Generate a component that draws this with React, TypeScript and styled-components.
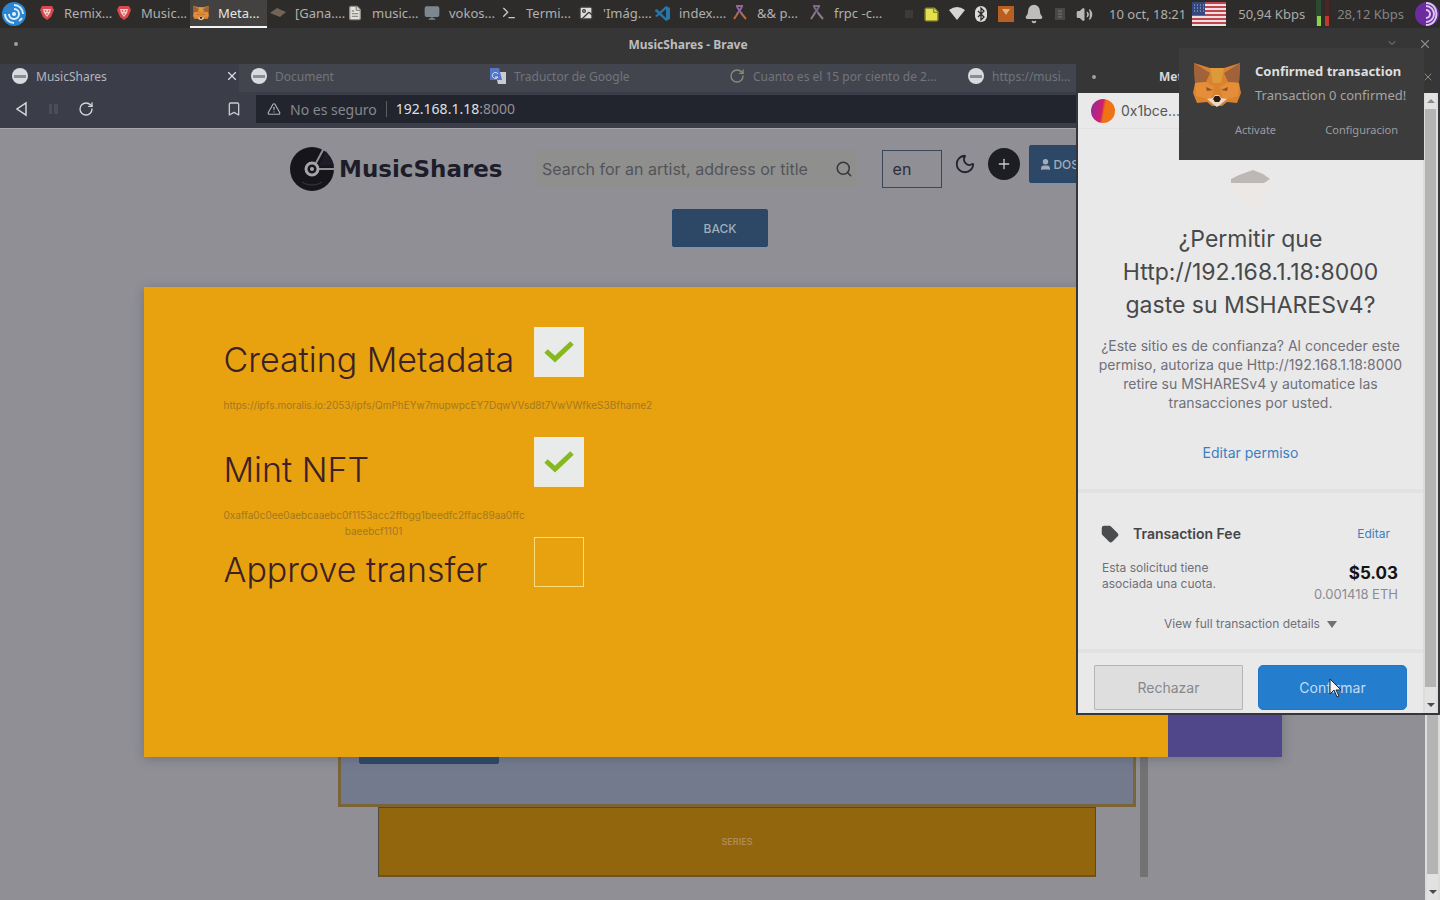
import React from 'react';
import styled, { createGlobalStyle } from 'styled-components';
import {
  Bell, Bookmark, ChevronDown, FileText, Image, Monitor, Moon, Plus, RotateCw, Search, StickyNote,
  Tag, Terminal, TriangleAlert, User, Volume2, X,
} from 'lucide-react';

const GlobalStyle = createGlobalStyle`
  * { box-sizing: border-box; }
  body { margin: 0; background: #8f8f95; }
  button, input, select { font: inherit; margin: 0; }
  h1, h2, p { margin: 0; font-weight: 400; }
  svg { display: block; flex: none; }
`;

const uiFont = '"Noto Sans", sans-serif';
const appFont = 'Inter, sans-serif';

/* ---------- desktop ---------- */

const Desktop = styled.div`
  position: relative;
  display: flex;
  flex-direction: column;
  min-height: 100vh;
  overflow: hidden;
  font-family: ${uiFont};
`;

const Panel = styled.header`
  display: flex;
  justify-content: space-between;
  height: 28px;
  background: #2d2c2b;
  color: #b0b0ae;
  font-size: 13px;
`;

const TaskList = styled.nav`
  display: flex;
  gap: 10px;
  padding-left: 2px;
  align-items: center;
`;

const Tasks = styled.div`
  display: flex;
`;

const Task = styled.button<{ $active?: boolean }>`
  display: flex;
  align-items: center;
  gap: 9px;
  width: 77px;
  height: 28px;
  padding: 0 0 0 3px;
  border: 0;
  border-bottom: 2px solid ${p => (p.$active ? '#f4f4f4' : 'transparent')};
  background: ${p => (p.$active ? '#434240' : 'transparent')};
  color: ${p => (p.$active ? '#e6e6e6' : '#b0b0ae')};
  white-space: nowrap;
`;

const Tray = styled.div`
  display: flex;
  align-items: center;
  padding-right: 1px;
  white-space: nowrap;
`;

const TrayIcons = styled.div`
  display: flex;
  align-items: center;
  gap: 9px;
  margin-right: 16px;
`;

const Clock = styled.span`
  margin-right: 6px;
`;

const TrayText = styled.span<{ $dim?: boolean }>`
  color: ${p => (p.$dim ? '#848484' : '#aaaaaa')};
  padding: 0 11px 0 ${p => (p.$dim ? 7 : 12)}px;
`;

/* ---------- browser window ---------- */

const TitleBar = styled.div`
  display: grid;
  grid-template-columns: 62px 1fr 62px;
  align-items: center;
  height: 36px;
  padding: 0 8px 4px 14px;
  background: #363636;
  color: #bdbdbd;
  font-size: 12px;
  font-weight: 700;
`;

const WindowTitle = styled.span`
  justify-self: center;
  padding-right: 70px;
`;

const WindowControls = styled.span`
  display: flex;
  justify-content: flex-end;
  gap: 20px;
  color: #8a8a8a;
`;

const Dot = styled.i`
  width: 4px;
  height: 4px;
  border-radius: 2px;
  background: #a0a0a0;
`;

const TabStrip = styled.div`
  display: flex;
  height: 28px;
  background: #43454e;
`;

const Tab = styled.div<{ $active?: boolean }>`
  display: flex;
  align-items: center;
  gap: 8px;
  width: 239px;
  padding: 0 0 4px 12px;
  background: ${p => (p.$active ? '#3b3d49' : '#43454e')};
  color: ${p => (p.$active ? '#b4b6bd' : '#71747c')};
  font-size: 12px;
  white-space: nowrap;
`;

const TabLabel = styled.span`
  flex: 1;
  overflow: hidden;
`;

const PlainButton = styled.button`
  display: flex;
  padding: 0;
  border: 0;
  background: none;
  color: inherit;
`;

const Toolbar = styled.div`
  display: flex;
  align-items: center;
  height: 37px;
  padding: 0 0 2px 14px;
  border-bottom: 1px solid #a5a7ab;
  background: #3b3d49;
  color: #c9cad0;
`;

const NavButtons = styled.div`
  display: flex;
  align-items: center;
  gap: 16px;
  width: 212px;
`;

const AddressBar = styled.div`
  display: flex;
  flex: 1;
  align-items: center;
  gap: 9px;
  height: 28px;
  margin-left: 14px;
  padding-left: 11px;
  background: #23252e;
  color: #85888f;
  font-size: 14px;
`;

const Address = styled.span`
  padding-left: 9px;
  border-left: 1px solid #5b5d65;
  line-height: 16px;
  color: #8f9299;
`;

const Host = styled.span`
  color: #dfe0e4;
`;

const Viewport = styled.div`
  position: relative;
  display: flex;
  flex: 1;
`;

const Page = styled.main`
  position: relative;
  display: flex;
  flex: 1;
  flex-direction: column;
  padding-bottom: 23px;
  background: #8f8f95;
  font-family: ${appFont};
`;

const SiteHeader = styled.div`
  display: flex;
  align-items: center;
  width: 100%;
  max-width: 845px;
  height: 80px;
  margin: 0 auto;
`;

const Brand = styled.a`
  display: flex;
  align-items: center;
  gap: 4px;
  width: 247px;
  color: #1d1d29;
  font-family: "DejaVu Sans", sans-serif;
  font-size: 23px;
  font-weight: 700;
  text-decoration: none;
`;

const SearchBox = styled.label`
  display: flex;
  align-items: center;
  width: 322px;
  height: 38px;
  padding: 0 4px 0 6px;
  background: #8f8f8e;
  color: #34353d;
`;

const SearchInput = styled.input`
  flex: 1;
  min-width: 0;
  padding: 0;
  border: 0;
  outline: 0;
  background: none;
  color: #3f4047;
  font-size: 16px;
  &::placeholder { color: #53545a; opacity: 1; }
`;

const Language = styled.select`
  width: 61px;
  height: 38px;
  margin-left: 25px;
  padding: 0 10px;
  border: 1px solid #3a4759;
  background: none;
  color: #2c2d35;
  font-size: 16px;
  appearance: none;
`;

const HeaderActions = styled.div`
  display: flex;
  align-items: center;
  gap: 12px;
  margin: 0 9px 10px 12px;
  color: #23242e;
`;

const AddButton = styled(PlainButton)`
  align-items: center;
  justify-content: center;
  width: 32px;
  height: 32px;
  border-radius: 16px;
  background: #1d1d24;
  color: #c9c9cd;
`;

const BlueButton = styled.button<{ $width: number }>`
  display: flex;
  align-items: center;
  justify-content: center;
  gap: 1px;
  width: ${p => p.$width}px;
  height: 38px;
  border: 1px solid #23496f;
  border-radius: 2px;
  background: #2c4866;
  color: #a3adb9;
  font-size: 12px;
  font-weight: 500;
`;

const WalletButton = styled(BlueButton)`
  justify-content: flex-start;
  margin-bottom: 10px;
  padding: 0 9px;
`;

const BackRow = styled.div`
  display: flex;
  justify-content: center;
  padding-left: 15px;
`;

const FormArea = styled.section`
  display: flex;
  align-self: center;
  width: 100%;
  max-width: 871px;
  margin-top: 60px;
  padding-left: 61px;
`;

const FormColumn = styled.div`
  display: flex;
  flex: 1;
  flex-direction: column;
  align-items: center;
`;

const FormCard = styled.div`
  display: flex;
  flex-direction: column;
  justify-content: flex-end;
  width: 100%;
  height: 500px;
  padding: 0 18px 40px;
  border: 3px solid #7a6538;
  background: #747a8e;
`;

const SeriesButton = styled.button`
  width: 90%;
  height: 70px;
  border: 1px solid #4e4a3a;
  border-bottom: 2px solid #6f5220;
  background: #91660d;
  color: #b08a58;
  font-size: 9px;
  font-weight: 600;
`;

const FormScroll = styled.div`
  width: 8px;
  margin-left: 4px;
  background: #727274;
`;

const Overlay = styled.div`
  position: absolute;
  inset: 158px 0 auto;
  display: flex;
  justify-content: center;
`;

const Modal = styled.section`
  display: grid;
  grid-template-columns: 1fr 114px;
  width: 80%;
  max-width: 1138px;
  height: 470px;
  box-shadow: 0 2px 10px rgba(60, 70, 80, 0.35);
`;

const Steps = styled.div`
  display: flex;
  flex-direction: column;
  padding: 40px 80px;
  background: #e8a10f;
`;

const ModalSide = styled.div`
  background: #50468a;
`;

const Step = styled.div<{ $height: number }>`
  display: grid;
  grid-template-columns: 300px 50px;
  grid-template-rows: 50px auto;
  column-gap: 10px;
  height: ${p => p.$height}px;
`;

const StepTitle = styled.h2`
  padding-top: 12px;
  color: #3b2128;
  font-size: 34px;
  font-weight: 300;
  line-height: 42px;
  white-space: nowrap;
`;

const StepBox = styled.span<{ $done?: boolean }>`
  display: flex;
  align-items: center;
  justify-content: center;
  width: 50px;
  height: 50px;
  border: 1px solid ${p => (p.$done ? '#f4ead0' : '#fbdc7c')};
  background: ${p => (p.$done ? '#e9ebea' : 'transparent')};
`;

const StepNote = styled.p`
  padding-top: 20px;
  color: #a17a22;
  font-size: 10px;
  line-height: 16px;
  text-align: center;
  white-space: nowrap;
`;

const NoteLink = styled.a`
  color: inherit;
  text-decoration: none;
`;

const ScrollTrack = styled.div`
  display: flex;
  flex-direction: column;
  align-items: center;
  justify-content: space-between;
  width: 15px;
  border: solid #dcdcdc;
  border-width: 0 2px;
  background: #e2e2e2;
`;

const ScrollThumb = styled.div`
  flex: 1;
  width: 100%;
  margin-bottom: 10px;
  background: #b4b4b4;
`;

const ScrollArrow = styled.i<{ $up?: boolean }>`
  margin: 6px 0;
  border: 4px solid transparent;
  border-top: ${p => (p.$up ? '0' : '4px solid #4a4a4a')};
  border-bottom: ${p => (p.$up ? '4px solid #8a8a8a' : '0')};
`;

/* ---------- wallet window ---------- */

const WalletWindow = styled.aside`
  position: absolute;
  top: 64px;
  right: 0;
  width: 364px;
  border: solid #35353b;
  border-width: 0 2px 2px;
  background: #35353b;
  font-family: ${appFont};
`;

const WalletTitle = styled.div`
  display: flex;
  align-items: center;
  height: 29px;
  padding: 0 4px 4px 14px;
  background: #363636;
  color: #d8d8d8;
  font-family: ${uiFont};
  font-size: 12px;
  font-weight: 700;
`;

const WalletTitleText = styled.span`
  flex: 1;
  padding-left: 63px;
`;

const WalletBody = styled.div`
  display: flex;
`;

const WalletContent = styled.div`
  flex: 1;
  background: #e9e9ea;
  color: #6f7078;
`;

const Account = styled.div`
  display: flex;
  align-items: center;
  gap: 6px;
  height: 36px;
  padding-left: 13px;
  border-bottom: 1px solid #e2e2e2;
  color: #55565a;
  font-size: 14px;
`;

const Avatar = styled.span`
  width: 24px;
  height: 24px;
  border-radius: 12px;
  background: linear-gradient(100deg, #8c2fa0, #d01f6c 45%, #ef7215 55%);
`;

const SiteIcon = styled.div`
  display: flex;
  justify-content: center;
  padding-top: 38px;
`;

const Question = styled.h1`
  margin-top: 16px;
  color: #48494b;
  font-size: 23px;
  line-height: 33px;
  text-align: center;
`;

const Explanation = styled.p`
  margin-top: 14px;
  font-size: 14px;
  line-height: 19px;
  text-align: center;
  white-space: nowrap;
`;

const WalletLink = styled.a<{ $size: number }>`
  color: #3b7fc0;
  font-size: ${p => p.$size}px;
  line-height: 20px;
  text-decoration: none;
`;

const Centered = styled.div`
  display: flex;
  justify-content: center;
  padding: 31px 0 26px;
`;

const Divider = styled.hr`
  height: 4px;
  margin: 0;
  border: 0;
  background: #e2e2e2;
`;

const FeeHeader = styled.div`
  display: flex;
  align-items: center;
  gap: 14px;
  padding: 31px 33px 0 23px;
  line-height: 20px;
`;

const FeeTitle = styled.strong`
  flex: 1;
  color: #444547;
  font-size: 14px;
  font-weight: 600;
`;

const FeeDetail = styled.div`
  display: flex;
  justify-content: space-between;
  padding: 16px 25px 0 24px;
  font-size: 12px;
  line-height: 16px;
`;

const Amount = styled.div`
  display: flex;
  flex-direction: column;
  align-items: flex-end;
  padding-top: 3px;
  font-size: 13px;
  line-height: 21px;
  color: #8b8b90;
`;

const Total = styled.strong`
  color: #131315;
  font-size: 17px;
  font-weight: 700;
`;

const DetailsButton = styled(PlainButton)`
  align-items: center;
  gap: 7px;
  margin: 10px auto 16px;
  font-size: 12px;
  line-height: 18px;
`;

const WalletActions = styled.div`
  display: grid;
  grid-template-columns: 1fr 1fr;
  gap: 15px;
  padding: 12px 16px 3px;
`;

const ActionButton = styled.button<{ $primary?: boolean }>`
  position: relative;
  height: 45px;
  border: 1px solid ${p => (p.$primary ? '#2377c6' : '#b5b5b7')};
  border-radius: ${p => (p.$primary ? 5 : 1)}px;
  background: ${p => (p.$primary ? '#247dcd' : '#dededf')};
  color: ${p => (p.$primary ? '#c4dcf2' : '#88888c')};
  font-size: 14px;
`;

const Pointer = styled.svg`
  position: absolute;
  top: 12px;
  left: 69px;
`;

/* ---------- notification ---------- */

const Toast = styled.section`
  position: absolute;
  top: 48px;
  right: 16px;
  display: grid;
  grid-template-columns: 48px 1fr;
  column-gap: 14px;
  width: 245px;
  height: 112px;
  padding: 13px 14px;
  background: #3c3c3c;
  color: #a4a4a4;
  font-size: 13px;
  line-height: 20px;
`;

const ToastText = styled.div`
  display: flex;
  flex-direction: column;
  gap: 4px;
  white-space: nowrap;
`;

const ToastTitle = styled.strong`
  color: #dedede;
`;

const ToastActions = styled.div`
  display: flex;
  grid-column: 1 / 3;
  justify-content: space-between;
  padding: 4px 12px 0 42px;
`;

const ToastButton = styled(PlainButton)`
  color: #9a9da3;
  font-size: 11px;
`;

/* ---------- drawings ---------- */

const Fox = ({ size }: { size: number }) => (
  <svg width={size} height={size} viewBox="0 0 48 48">
    <path d="M1 2l16 5h14l16-5-1 20 2 10-4 10-10-1-5 4h-10l-5-4-10 1-4-10 2-10z" fill="#d9822f" />
    <path d="M1 2l16 10-4 9-11 1zM47 2L31 12l4 9 11 1z" fill="#a0623a" />
    <path d="M17 7h14l-3 15h-8z" fill="#dd9a3a" />
    <path d="M2 22l11-1 8 5-3 13-15-4zM46 22l-11-1-8 5 3 13 15-4z" fill="#e58d38" />
    <path d="M13 26l7 3-6 1zM35 26l-7 3 6 1z" fill="#8a5428" />
    <path d="M14 38l6-1 2-3h4l2 3 6 1-6 5-4 3-4-3z" fill="#e8d9c9" />
    <path d="M20 38l2-3h4l2 3-2 3h-4z" fill="#2c1a14" />
  </svg>
);

const Lion = () => (
  <svg width="16" height="16" viewBox="0 0 16 16">
    <path d="M3 1h10l2 4-3 7-4 3-4-3-3-7z" fill="#d8484c" />
    <path d="M4 4h8l-1 4-3 4-3-4z" fill="#f3cdce" />
    <path d="M6 5l1 2M10 5L9 7M8 8v2" stroke="#d8484c" />
  </svg>
);

const Swirl = () => (
  <svg width="24" height="24" viewBox="0 0 24 24" fill="none">
    <circle cx="12" cy="12" r="12" fill="#2b86cf" />
    <circle cx="12" cy="12" r="2" fill="#e7f3fc" />
    <path d="M12 7a5 5 0 1 1-5 5M12 3a9 9 0 0 1 9 9M3 12a9 9 0 0 0 9 9M17 19a9 9 0 0 0 3-3" stroke="#dceefa" strokeWidth="2" />
  </svg>
);

const Disc = () => (
  <svg width="45" height="45" viewBox="0 0 45 45" fill="none">
    <circle cx="22" cy="22" r="22" fill="#15151b" />
    <path d="M26 16L34 1M28 22h17" stroke="#8f8f95" strokeWidth="2" />
    <path d="M36 4l8 14-15 1z" fill="#1d1d29" />
    <circle cx="22" cy="22" r="6" fill="#15151b" stroke="#a5a5a9" strokeWidth="3" />
    <circle cx="22" cy="22" r="2" fill="#a5a5a9" />
    <path d="M12 35c6 4 14 4 20 0" stroke="#3a3a42" />
  </svg>
);

const PageIcon = () => (
  <svg width="16" height="16" viewBox="0 0 16 16">
    <circle cx="8" cy="8" r="8" fill="#d9dae0" />
    <path d="M2 7h12v3H2z" fill="#8b8d95" />
  </svg>
);

const Translate = () => (
  <svg width="16" height="16" viewBox="0 0 16 16">
    <path d="M5 4h11v12H8z" fill="#c9cbd2" />
    <path d="M0 0h9l3 12H0z" fill="#5476c9" />
    <path d="M8 6a3 3 0 1 0 0 3H5" fill="none" stroke="#dfe5f6" />
  </svg>
);

const CodeMark = () => (
  <svg width="15" height="15" viewBox="0 0 15 15">
    <path d="M0 4l2-1 9 9V3L2 11l-2-1 11-10 4 2v11l-4 2L0 5z" fill="#2577ac" />
  </svg>
);

const Ribbon = ({ dim }: { dim?: boolean }) => (
  <svg width="16" height="16" viewBox="0 0 16 16" fill="none" strokeWidth="2">
    <path d="M4 1h7M5 2l5 7M10 2L5 9" stroke={dim ? '#7c6a85' : '#94679b'} />
    <path d="M6 8l-4 6M9 8l5 6" stroke={dim ? '#8a7a8c' : '#b96a3e'} />
  </svg>
);

const BluetoothBadge = () => (
  <svg width="14" height="18" viewBox="0 0 14 18">
    <rect x="1" y="1" width="12" height="16" rx="6" fill="#dcdcdc" />
    <path d="M4 6l6 6-3 3V3l3 3-6 6" fill="none" stroke="#2d2c2b" strokeWidth="1.3" />
  </svg>
);

const Flag = () => (
  <svg width="34" height="24" viewBox="0 0 34 24">
    <path d="M0 0h34v24H0z" fill="#e6e2e2" />
    <path d="M0 1h34M0 5h34M0 9h34M0 13h34M0 17h34M0 21h34" stroke="#c4424c" strokeWidth="2" />
    <path d="M0 0h13v13H0z" fill="#36467f" />
    <path d="M2 3h10M2 6h10M2 9h10" stroke="#b9bfd6" strokeDasharray="1 2" />
  </svg>
);

const Meter = () => (
  <svg width="14" height="28" viewBox="0 0 14 28">
    <path d="M0 0h5v26H0z" fill="#2b4a2f" />
    <path d="M9 0h4v26H9z" fill="#4d2524" />
    <path d="M1 16h4v10H1z" fill="#8ed04b" />
    <path d="M9 16h4v10H9z" fill="#c0392b" />
  </svg>
);

const Broadcast = () => (
  <svg width="24" height="24" viewBox="0 0 24 24" fill="none">
    <circle cx="12" cy="12" r="12" fill="#6d2ba0" />
    <path d="M11 4a8 8 0 0 1 0 16M11 8a4 4 0 0 1 0 8M11 1c14 0 14 22 0 22" stroke="#dcc8ec" strokeWidth="2" />
  </svg>
);

const tasks: { icon: React.ReactNode; label: string; active?: boolean }[] = [
  { icon: <Lion />, label: 'Remix...' },
  { icon: <Lion />, label: 'Music...' },
  { icon: <Fox size={16} />, label: 'Meta...', active: true },
  { icon: <svg width="16" height="16"><path d="M0 8l7-5 9 4-6 5z" fill="#716457" /></svg>, label: '[Gana....' },
  { icon: <FileText size={16} color="#8f8d88" fill="#e3e1dc" />, label: 'music...' },
  { icon: <Monitor size={16} color="#7d8790" fill="#7d8790" />, label: 'vokos...' },
  { icon: <Terminal size={16} color="#c8c8c8" />, label: 'Termi...' },
  { icon: <Image size={16} color="#3a3a3a" fill="#dedede" />, label: "'Imág...." },
  { icon: <CodeMark />, label: 'index....' },
  { icon: <Ribbon />, label: '&& p...' },
  { icon: <Ribbon dim />, label: 'frpc -c...' },
];

const tabs: { icon: React.ReactNode; label: string; active?: boolean }[] = [
  { icon: <PageIcon />, label: 'MusicShares', active: true },
  { icon: <PageIcon />, label: 'Document' },
  { icon: <Translate />, label: 'Traductor de Google' },
  { icon: <RotateCw size={16} color="#8d8a7c" />, label: 'Cuanto es el 15 por ciento de 2...' },
  { icon: <PageIcon />, label: 'https://musi...' },
];

const Check = () => (
  <svg width="32" height="26" viewBox="0 0 32 26">
    <path d="M3 12l9 8L29 4" fill="none" stroke="#86b81f" strokeWidth="5" />
  </svg>
);

export default function App() {
  return (
    <Desktop>
      <GlobalStyle />
      <Panel>
        <TaskList>
          <Swirl />
          <Tasks>
            {tasks.map(t => (
              <Task key={t.label} $active={t.active}>{t.icon}{t.label}</Task>
            ))}
          </Tasks>
        </TaskList>
        <Tray>
          <TrayIcons>
            <svg width="10" height="10"><path d="M1 1h8v8H1z" fill="#3c3b3a" /></svg>
            <StickyNote size={17} color="#8b8a2e" fill="#e5e04e" />
            <svg width="16" height="14"><path d="M0 3q8-6 16 0l-8 10z" fill="#d5d5d5" /></svg>
            <BluetoothBadge />
            <svg width="18" height="18"><path d="M1 1h16v16H1z" fill="#b95f22" /><path d="M5 4h8l-4 6z" fill="#e8b27a" /></svg>
            <Bell size={20} color="#bdbdbd" fill="#bdbdbd" />
            <svg width="14" height="14"><path d="M2 1h10v12H2z" fill="#484848" /><path d="M5 4h4M5 7h4M5 10h4" stroke="#777" /></svg>
            <Volume2 size={17} color="#b8b8b8" fill="#b8b8b8" />
          </TrayIcons>
          <Clock>10 oct, 18:21</Clock>
          <Flag />
          <TrayText>50,94 Kbps</TrayText>
          <Meter />
          <TrayText $dim>28,12 Kbps</TrayText>
          <Broadcast />
        </Tray>
      </Panel>

      <TitleBar>
        <Dot />
        <WindowTitle>MusicShares - Brave</WindowTitle>
        <WindowControls><ChevronDown size={12} /><X size={14} /></WindowControls>
      </TitleBar>
      <TabStrip>
        {tabs.map(t => (
          <Tab key={t.label} $active={t.active}>
            {t.icon}
            <TabLabel>{t.label}</TabLabel>
            {t.active && <PlainButton aria-label="Close tab"><X size={14} color="#dcdde2" /></PlainButton>}
          </Tab>
        ))}
      </TabStrip>
      <Toolbar>
        <NavButtons>
          <PlainButton aria-label="Back">
            <svg width="16" height="16"><path d="M12 2v12L3 8z" fill="none" stroke="#d4d5da" strokeWidth="1.5" /></svg>
          </PlainButton>
          <PlainButton aria-label="Forward">
            <svg width="16" height="16"><path d="M3 3h3v10H3zM8 3h4v10H8z" fill="#4b4d57" /></svg>
          </PlainButton>
          <PlainButton aria-label="Reload"><RotateCw size={16} color="#d4d5da" /></PlainButton>
        </NavButtons>
        <PlainButton aria-label="Bookmark"><Bookmark size={16} /></PlainButton>
        <AddressBar>
          <TriangleAlert size={14} color="#aeb0b5" />
          <span>No es seguro</span>
          <Address><Host>192.168.1.18</Host>:8000</Address>
        </AddressBar>
      </Toolbar>

      <Viewport>
        <Page>
          <SiteHeader>
            <Brand href="#"><Disc />MusicShares</Brand>
            <SearchBox>
              <SearchInput aria-label="Search" placeholder="Search for an artist, address or title" />
              <Search size={18} />
            </SearchBox>
            <Language aria-label="Language" defaultValue="en"><option value="en">en</option></Language>
            <HeaderActions>
              <PlainButton aria-label="Dark mode"><Moon size={22} /></PlainButton>
              <AddButton aria-label="Add"><Plus size={16} /></AddButton>
            </HeaderActions>
            <WalletButton $width={106}><User size={13} fill="currentColor" />DOS</WalletButton>
          </SiteHeader>
          <BackRow><BlueButton $width={96}>BACK</BlueButton></BackRow>
          <FormArea>
            <FormColumn>
              <FormCard><BlueButton $width={140} aria-label="Upload" /></FormCard>
              <SeriesButton>SERIES</SeriesButton>
            </FormColumn>
            <FormScroll />
          </FormArea>
          <Overlay>
            <Modal>
              <Steps>
                <Step $height={110}>
                  <StepTitle>Creating Metadata</StepTitle>
                  <StepBox $done><Check /></StepBox>
                  <StepNote><NoteLink href="#">https://ipfs.moralis.io:2053/ipfs/QmPhEYw7mupwpcEY7DqwVVsd8t7VwVWfkeS3Bfhame2</NoteLink></StepNote>
                </Step>
                <Step $height={100}>
                  <StepTitle>Mint NFT</StepTitle>
                  <StepBox $done><Check /></StepBox>
                  <StepNote>0xaffa0c0ee0aebcaaebc0f1153acc2ffbgg1beedfc2ffac89aa0ffc<br />baeebcf1101</StepNote>
                </Step>
                <Step $height={50}>
                  <StepTitle>Approve transfer</StepTitle>
                  <StepBox />
                </Step>
              </Steps>
              <ModalSide />
            </Modal>
          </Overlay>
        </Page>
        <ScrollTrack>
          <ScrollThumb />
          <ScrollArrow />
        </ScrollTrack>
      </Viewport>

      <WalletWindow>
        <WalletTitle>
          <Dot />
          <WalletTitleText>Met</WalletTitleText>
          <X size={12} color="#8a8a8a" />
        </WalletTitle>
        <WalletBody>
          <WalletContent>
            <Account><Avatar />0x1bce...</Account>
            <SiteIcon>
              <svg width="44" height="40" viewBox="0 0 44 40">
                <circle cx="22" cy="20" r="19" fill="#ebe8e6" />
                <path d="M2 12l8-4 14-5 10 4 7 5-6 4H2z" fill="#bdb8b6" />
              </svg>
            </SiteIcon>
            <Question>¿Permitir que<br />Http://192.168.1.18:8000<br />gaste su MSHARESv4?</Question>
            <Explanation>
              ¿Este sitio es de confianza? Al conceder este<br />
              permiso, autoriza que Http://192.168.1.18:8000<br />
              retire su MSHARESv4 y automatice las<br />
              transacciones por usted.
            </Explanation>
            <Centered><WalletLink href="#" $size={14}>Editar permiso</WalletLink></Centered>
            <Divider />
            <FeeHeader>
              <Tag size={18} color="#4b4c4e" fill="#4b4c4e" />
              <FeeTitle>Transaction Fee</FeeTitle>
              <WalletLink href="#" $size={12}>Editar</WalletLink>
            </FeeHeader>
            <FeeDetail>
              <p>Esta solicitud tiene<br />asociada una cuota.</p>
              <Amount><Total>$5.03</Total><span>0.001418 ETH</span></Amount>
            </FeeDetail>
            <DetailsButton>
              View full transaction details
              <svg width="10" height="8"><path d="M0 1h10L5 8z" fill="#6f7078" /></svg>
            </DetailsButton>
            <Divider />
            <WalletActions>
              <ActionButton>Rechazar</ActionButton>
              <ActionButton $primary>
                Confirmar
                <Pointer width="14" height="20" viewBox="0 0 14 20">
                  <path d="M2 1v15l4-4 3 7 2-1-3-6h5z" fill="#f4f4f4" stroke="#1f2329" />
                </Pointer>
              </ActionButton>
            </WalletActions>
          </WalletContent>
          <ScrollTrack>
            <ScrollArrow $up />
            <ScrollThumb />
            <ScrollArrow />
          </ScrollTrack>
        </WalletBody>
      </WalletWindow>

      <Toast>
        <Fox size={48} />
        <ToastText>
          <ToastTitle>Confirmed transaction</ToastTitle>
          <span>Transaction 0 confirmed!</span>
        </ToastText>
        <ToastActions>
          <ToastButton>Activate</ToastButton>
          <ToastButton>Configuracion</ToastButton>
        </ToastActions>
      </Toast>
    </Desktop>
  );
}
